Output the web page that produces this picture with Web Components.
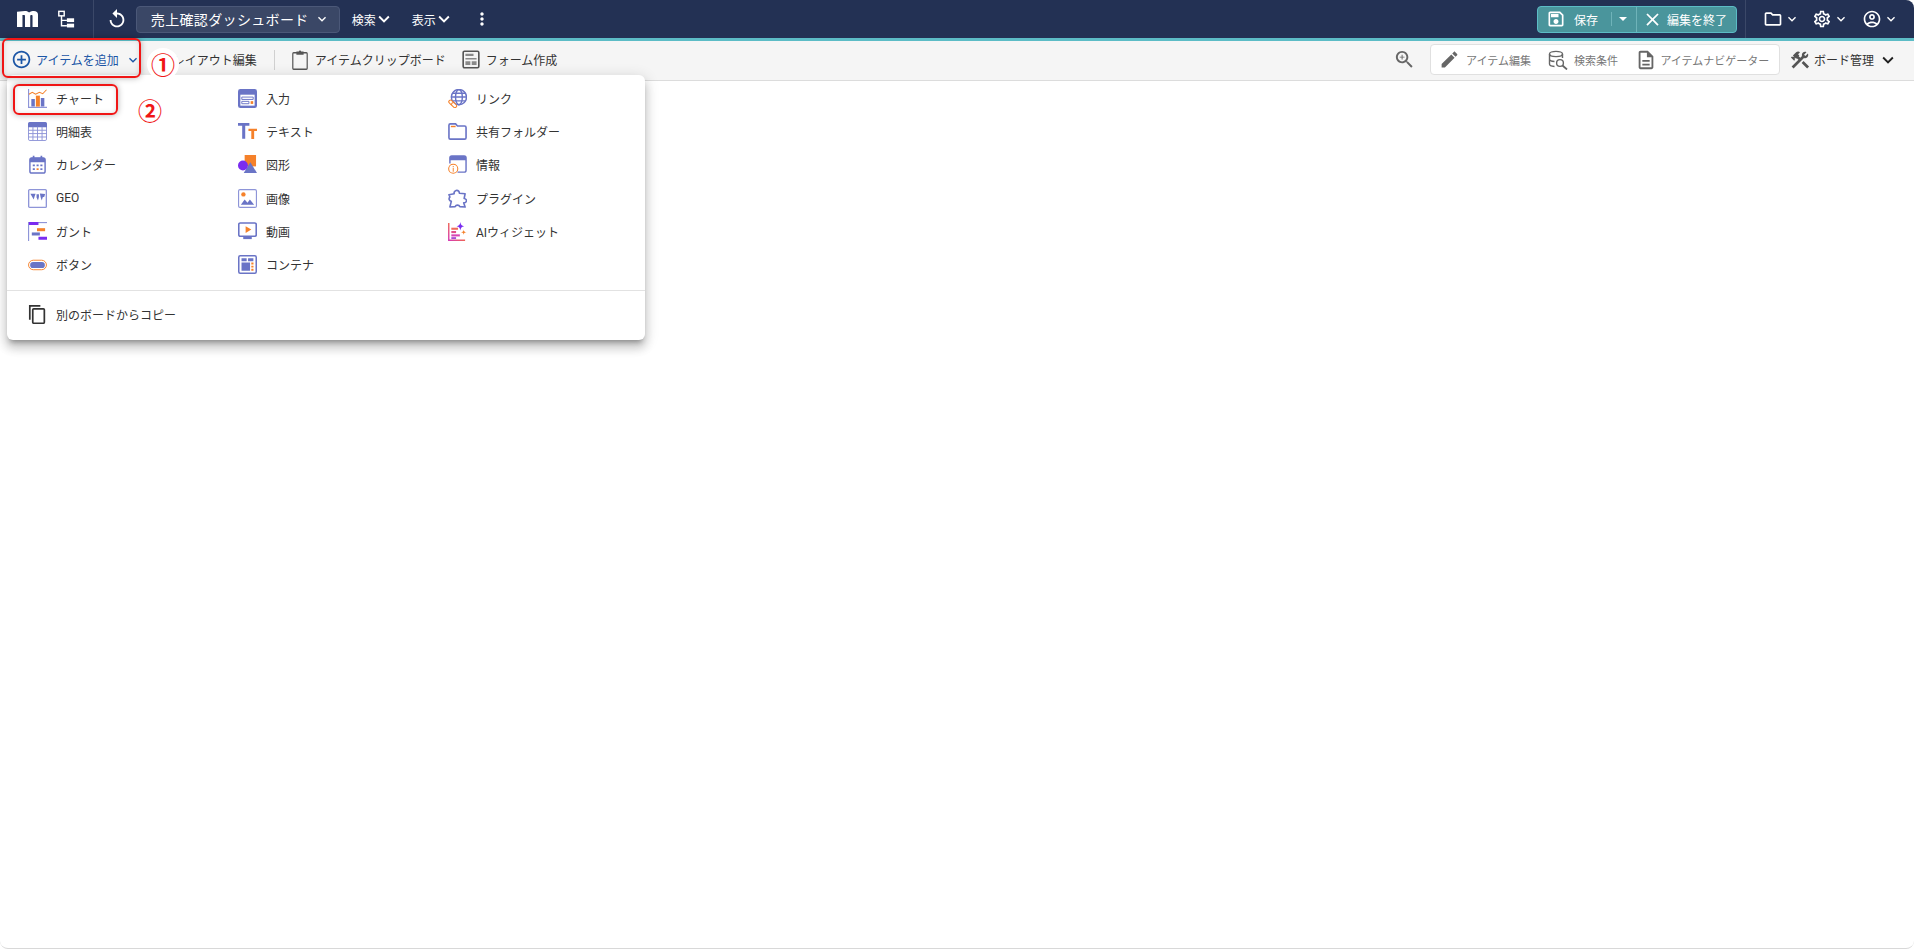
<!DOCTYPE html>
<html lang="ja">
<head>
<meta charset="utf-8">
<title>売上確認ダッシュボード</title>
<style>
  html, body { margin: 0; padding: 0; background: #fff; }
  body { font-family: Roboto, "Noto Sans CJK JP", sans-serif; }
</style>
</head>
<body>
<app-shell>
  <app-header></app-header>
  <app-toolbar></app-toolbar>
  <add-menu></add-menu>
  <callout-box style="left:2px;top:38px;width:135px;height:36px"></callout-box>
  <callout-box style="left:13px;top:84px;width:101px;height:27px"></callout-box>
  <callout-mark style="left:147px;top:48px" halo>①</callout-mark>
  <callout-mark style="left:134px;top:94px">②</callout-mark>
</app-shell>

<script>
// material style paths, drawn on a 24 box
const MAT = {
  chevron: 'M16.59 8.59L12 13.17 7.41 8.59 6 10l6 6 6-6z',
  kebab: 'M12 8c1.1 0 2-.9 2-2s-.9-2-2-2-2 .9-2 2 .9 2 2 2zm0 2c-1.1 0-2 .9-2 2s.9 2 2 2 2-.9 2-2-.9-2-2-2zm0 6c-1.1 0-2 .9-2 2s.9 2 2 2 2-.9 2-2-.9-2-2-2z',
  replay: 'M12 5V1L7 6l5 5V7c3.31 0 6 2.69 6 6s-2.69 6-6 6-6-2.69-6-6H4c0 4.42 3.58 8 8 8s8-3.58 8-8-3.58-8-8-8z',
  save: 'M17 3H5c-1.11 0-2 .9-2 2v14c0 1.1.89 2 2 2h14c1.1 0 2-.9 2-2V7l-4-4zm2 16H5V5h11.17L19 7.83V19zm-7-7c-1.66 0-3 1.34-3 3s1.34 3 3 3 3-1.34 3-3-1.34-3-3-3zM6 6h9v4H6z',
  close: 'M19 6.41L17.59 5 12 10.59 6.41 5 5 6.41 10.59 12 5 17.59 6.41 19 12 13.41 17.59 19 19 17.59 13.41 12z',
  folder: 'M9.17 6l2 2H20v10H4V6h5.17M10 4H4c-1.1 0-1.99.9-1.99 2L2 18c0 1.1.9 2 2 2h16c1.1 0 2-.9 2-2V8c0-1.1-.9-2-2-2h-8l-2-2z',
  gear: 'M19.43 12.98c.04-.32.07-.64.07-.98 0-.34-.03-.66-.07-.98l2.11-1.65c.19-.15.24-.42.12-.64l-2-3.46c-.09-.16-.26-.25-.44-.25-.06 0-.12.01-.17.03l-2.49 1c-.52-.4-1.08-.73-1.69-.98l-.38-2.65C14.46 2.18 14.25 2 14 2h-4c-.25 0-.46.18-.49.42l-.38 2.65c-.61.25-1.17.59-1.69.98l-2.49-1c-.06-.02-.12-.03-.18-.03-.17 0-.34.09-.43.25l-2 3.46c-.13.22-.07.49.12.64l2.11 1.65c-.04.32-.07.65-.07.98 0 .33.03.66.07.98l-2.11 1.65c-.19.15-.24.42-.12.64l2 3.46c.09.16.26.25.44.25.06 0 .12-.01.17-.03l2.49-1c.52.4 1.08.73 1.69.98l.38 2.65c.03.24.24.42.49.42h4c.25 0 .46-.18.49-.42l.38-2.65c.61-.25 1.17-.59 1.69-.98l2.49 1c.06.02.12.03.18.03.17 0 .34-.09.43-.25l2-3.46c.12-.22.07-.49-.12-.64l-2.11-1.65zm-1.98-1.71c.04.31.05.52.05.73 0 .21-.02.43-.05.73l-.14 1.13.89.7 1.08.84-.7 1.21-1.27-.51-1.04-.42-.9.68c-.43.32-.84.56-1.25.73l-1.06.43-.16 1.13-.2 1.35h-1.4l-.19-1.35-.16-1.13-1.06-.43c-.43-.18-.83-.41-1.23-.71l-.91-.7-1.06.43-1.27.51-.7-1.21 1.08-.84.89-.7-.14-1.13c-.03-.31-.05-.54-.05-.74s.02-.43.05-.73l.14-1.13-.89-.7-1.08-.84.7-1.21 1.27.51 1.04.42.9-.68c.43-.32.84-.56 1.25-.73l1.06-.43.16-1.13.2-1.35h1.39l.19 1.35.16 1.13 1.06.43c.43.18.83.41 1.23.71l.91.7 1.06-.43 1.27-.51.7 1.21-1.07.85-.89.7.14 1.13zM12 8c-2.21 0-4 1.79-4 4s1.79 4 4 4 4-1.79 4-4-1.79-4-4-4zm0 6c-1.1 0-2-.9-2-2s.9-2 2-2 2 .9 2 2-.9 2-2 2z',
  user: 'M12 2C6.48 2 2 6.48 2 12s4.48 10 10 10 10-4.48 10-10S17.52 2 12 2zM7.35 18.5C8.66 17.56 10.26 17 12 17s3.34.56 4.65 1.5c-1.31.94-2.91 1.5-4.65 1.5s-3.34-.56-4.65-1.5zm10.79-1.38C16.45 15.8 14.32 15 12 15s-4.45.8-6.14 2.12C4.7 15.73 4 13.95 4 12c0-4.42 3.58-8 8-8s8 3.58 8 8c0 1.95-.7 3.73-1.86 5.12zM12 6c-1.93 0-3.5 1.57-3.5 3.5S10.07 13 12 13s3.5-1.57 3.5-3.5S13.93 6 12 6zm0 5c-.83 0-1.5-.67-1.5-1.5S11.17 8 12 8s1.5.67 1.5 1.5S12.83 11 12 11z',
  zoom: 'M15.5 14h-.79l-.28-.27C15.41 12.59 16 11.11 16 9.5 16 5.91 13.09 3 9.5 3S3 5.91 3 9.5 5.91 16 9.5 16c1.61 0 3.09-.59 4.23-1.57l.27.28v.79l5 4.99L20.49 19l-4.99-5zm-6 0C7.01 14 5 11.99 5 9.5S7.01 5 9.5 5 14 7.01 14 9.5 11.99 14 9.5 14zM12 10h-2v2H9v-2H7V9h2V7h1v2h2v1z',
  edit: 'M3 17.25V21h3.75L17.81 9.94l-3.75-3.75L3 17.25zM20.71 7.04c.39-.39.39-1.02 0-1.41l-2.34-2.34c-.39-.39-1.02-.39-1.41 0l-1.83 1.83 3.75 3.75 1.83-1.83z',
  doc: 'M8 16h8v2H8zm0-4h8v2H8zm6-10H6c-1.1 0-2 .9-2 2v16c0 1.1.89 2 1.99 2H18c1.1 0 2-.9 2-2V8l-6-6zm4 18H6V4h7v5h5v11z',
  tools: 'M13.78 15.3L19.78 21.3L21.89 19.14L15.89 13.14L13.78 15.3M17.5 10.1C17.11 10.1 16.69 10.05 16.36 9.91L4.97 21.25L2.86 19.14L10.27 11.74L8.5 9.96L7.78 10.66L6.33 9.25V12.11L5.63 12.81L2.11 9.25L2.81 8.55H5.62L4.22 7.14L7.78 3.58C8.95 2.41 10.83 2.41 12 3.58L9.89 5.74L11.3 7.14L10.59 7.85L12.38 9.63L14.2 7.75C14.06 7.42 14 7 14 6.63C14 4.66 15.56 3.11 17.5 3.11C18.09 3.11 18.61 3.25 19.08 3.53L16.41 6.2L17.91 7.7L20.58 5.03C20.86 5.5 21 6 21 6.63C21 8.55 19.45 10.1 17.5 10.1Z',
  plus: 'M13 7h-2v4H7v2h4v4h2v-4h4v-2h-4V7zm-1-5C6.48 2 2 6.48 2 12s4.48 10 10 10 10-4.48 10-10S17.52 2 12 2zm0 18c-4.41 0-8-3.59-8-8s3.59-8 8-8 8 3.59 8 8-3.59 8-8 8z'
};

// hand drawn ones, on a 20 box
const B = '#6a74c6', L = '#8e95d8', O = '#f5812a', P = '#7a2cf0';
const DRAWN = {
  logo: `<path fill="currentColor" d="M0 1 7.5 0C9.5 0 10.800 .8 11.500 2 13 .5 14.800 0 16 0c2.500 0 4 1.700 4 4.300V20h-5.200V6.300c0-.9-.3-1.300-1-1.300s-1.200.5-1.200 1.200V20H7.600V6.300c0-.9-.3-1.300-1-1.300H5.200V20H0z"/>`,
  tree: `<g fill="none" stroke="currentColor" stroke-width="1.6"><rect x="2" y="1.5" width="6" height="5"/><path d="M5 6.5V17.5H11M5 11.5H11"/></g><rect x="11" y="9.2" width="8" height="4.2" fill="currentColor"/><rect x="11" y="15.2" width="8" height="4.2" fill="currentColor"/>`,
  clip: `<rect x="1" y="2.800" width="18" height="16.400" rx="1" fill="none" stroke="#555" stroke-width="1.500"/><path fill="#555" d="M5.500 1.500h3a1.500 1 0 0 1 3 0h3V4.800h-9z"/>`,
  form: `<rect x="1.300" y="1.300" width="17.400" height="17.400" rx="1.500" fill="none" stroke="#555" stroke-width="1.800"/><path fill="#8a8a8a" d="M3.800 4h9v2.400h-9zM3.800 8.300h12.400v1.800H3.800zM3.800 11.800h5.500v4H3.800zM10.800 11.800h5.400v4h-5.400z"/>`,
  dbsearch: `<g fill="none" stroke="#666" stroke-width="1.400"><ellipse cx="8" cy="4" rx="6.500" ry="2.600"/><path d="M1.500 4v10c0 1.300 2.200 2.300 5 2.500M14.500 4v4M1.500 9c0 1.300 2.400 2.400 5 2.500"/><circle cx="12" cy="13" r="3.400"/><path d="M14.500 15.500 19 19.500" stroke-width="1.700"/></g>`,
  copy: `<path fill="#333" d="M1 0h12v1.800H2.800V15.500H1z"/><rect x="5" y="4" width="12.200" height="15.200" rx="1" fill="none" stroke="#333" stroke-width="1.800"/>`,
  chart: `<path d="M.6 0V19.400H20" fill="none" stroke="${L}" stroke-width="1.200"/><path fill="${B}" d="M3.500 10.500h3.700V18.500H3.500zM13.500 9.500h3.700V18.500h-3.700z"/><path fill="${O}" d="M8.300 7h4.200V18.500H8.300z"/><path d="M1 5.500 4.500 3.500 8 5.500 12 3.500 15.500 5 19.500.8" fill="none" stroke="${O}" stroke-width="1.100"/>`,
  table: `<rect x=".5" y=".5" width="19" height="19" rx="1.500" fill="#fff" stroke="${L}"/><path fill="${B}" d="M2 0h16a2 2 0 0 1 2 2v3.500H0V2a2 2 0 0 1 2-2z"/><path stroke="${L}" d="M5.200 5v14M10 5v14M14.800 5v14M0 8.700h20M0 12.200h20M0 15.800h20"/>`,
  calendar: `<rect x="2" y="3" width="16" height="16" rx="2" fill="none" stroke="${B}" stroke-width="1.500"/><path fill="${B}" d="M2 5a2 2 0 0 1 2-2h12a2 2 0 0 1 2 2v2.500H2zM5 .8h1.800v3H5zM13.200 .8H15v3h-1.800z"/><path fill="${B}" d="M5 10h2.200v1.800H5zM9 10h2.200v1.800H9zM13 10h2.200v1.800H13zM5 14h2.200v1.800H5z"/><path fill="${O}" d="M9 14h2.200v1.800H9z"/><path fill="${B}" d="M13 14h2.200v1.800H13z"/>`,
  geo: `<rect x=".7" y=".7" width="18.600" height="18.600" rx="1" fill="none" stroke="${L}" stroke-width="1.400"/><path fill="${B}" d="M2.500 5h5.500L7 7.500 6 11 4.200 8zM9 5.500h2.500v2.800l-1 3.700L9 9zM12.500 4.800l5.500.4-.8 3-1.700.4-1 3.500-1.200-3.500z"/>`,
  gantt: `<path d="M.6 0V20" stroke="${L}" stroke-width="1.200"/><path d="M1 .6H20" stroke="${L}" stroke-width="1.200"/><path fill="${P}" d="M1 0h10v3.200H1zM11 15.500h9v3.200h-9z"/><path fill="${O}" d="M9.500 6.500h8.500v3.200H9.500z"/><path fill="${B}" d="M4 11h8.500v3.200H4z"/>`,
  button: `<rect x=".6" y="5.500" width="18.800" height="10" rx="5" fill="#fff" stroke="${O}"/><rect x="2.300" y="7.300" width="15.400" height="6.400" rx="3" fill="${B}"/>`,
  input: `<rect width="20" height="20" rx="2.500" fill="${B}"/><rect x="2.500" y="6" width="15" height="11.500" fill="#fff"/><path fill="none" stroke="${B}" d="M4 8.500h12v2.500H4zM4 13h7.500v2.500H4z"/><path fill="${O}" d="M13.300 12.800h2.700v2.900h-2.700z"/>`,
  text: `<path fill="${B}" d="M0 1h12v3H7.600v13.500H4.400V4H0z"/><path fill="${O}" d="M11 7h9v2.600h-3V18h-3V9.600h-3z"/>`,
  shape: `<path fill="${O}" d="M7 0h12v12H7z"/><path fill="${B}" d="M13 7.500 20 19H6z"/><circle cx="5.200" cy="11" r="5.200" fill="${P}"/>`,
  image: `<rect x=".6" y=".6" width="18.800" height="18.800" rx="1.500" fill="#fff" stroke="${L}" stroke-width="1.200"/><circle cx="5.700" cy="5.700" r="2.300" fill="${O}"/><path fill="${B}" d="M3 16.500 7 11l3 3.600 2.500-3.600 4.500 5.500z"/>`,
  video: `<rect x=".8" y="1" width="18.400" height="14" rx="1.500" fill="#fff" stroke="${B}" stroke-width="1.700"/><path fill="${O}" d="M8 4.500 14 8l-6 3.500z"/><path fill="${B}" d="M5.500 15.500h9V18h-9z"/>`,
  container: `<rect x=".8" y=".8" width="18.400" height="18.400" rx="1.500" fill="#fff" stroke="${B}" stroke-width="1.600"/><path fill="${B}" d="M3.700 3.500h5.400v3H3.700zM10.600 3.500h5.600v3h-5.600zM3.700 8h9v8.500h-9z"/><path fill="${O}" d="M14 8h2.300v2H14zM14 11.200h2.300v2H14zM14 14.500h2.300v2H14z"/>`,
  link: `<g fill="none" stroke="${B}" stroke-width="1.500"><circle cx="11.500" cy="8.500" r="8"/><ellipse cx="11.500" cy="8.500" rx="3.600" ry="8"/><path d="M3.500 8.500h16M4.700 4.500h13.600M4.700 12.500h13.600"/></g><g fill="#fff" stroke="${O}" stroke-width="1.100"><rect x=".5" y="12.500" width="6" height="3.600" rx="1.800" transform="rotate(45 3.500 14.300)"/><rect x="3.400" y="15.200" width="6" height="3.600" rx="1.800" transform="rotate(45 6.400 17)"/></g>`,
  share: `<path d="M1 3.500a1.500 1.500 0 0 1 1.500-1.500H8l2 2.200h7.500A1.500 1.500 0 0 1 19 5.700V16.500a1.500 1.500 0 0 1-1.500 1.500h-15A1.500 1.500 0 0 1 1 16.500z" fill="none" stroke="${B}" stroke-width="1.700"/><path fill="${O}" d="M3 4h5v1.500H3z"/>`,
  info: `<path d="M2 9V3a2 2 0 0 1 2-2h13a2 2 0 0 1 2 2v13a2 2 0 0 1-2 2H10" fill="none" stroke="${B}" stroke-width="1.500"/><path fill="${B}" d="M2 3a2 2 0 0 1 2-2h13a2 2 0 0 1 2 2v2.500H2z"/><circle cx="5.500" cy="14.500" r="4.800" fill="#fff" stroke="${O}" stroke-width="1.100"/><path fill="${O}" d="M5 13.500h1v4H5zM5 11.600h1v1H5z"/>`,
  plugin: `<path d="M8.500 1.500C11 1 12 3 12 4.500L18 5 17 10C19 10 20 12 19 13.500 18.500 14.500 17 14.500 16.500 14.500L18 19 12.500 18.500C11.500 16.500 8.500 16.500 7.500 18.500L2 19 3.500 13C1 12.500 .5 10 2 8.500L1 6 6.500 5C6 3 7 2 8.500 1.500Z" fill="none" stroke="${B}" stroke-width="1.700" stroke-linejoin="round"/>`,
  ai: `<defs><linearGradient id="aig" x1="0" y1="1" x2="1" y2="0"><stop offset="0" stop-color="#d63bb4"/><stop offset=".55" stop-color="#f26a4a"/><stop offset="1" stop-color="#6a4cf0"/></linearGradient></defs><path d="M.8 1V19.200H18" fill="none" stroke="url(#aig)" stroke-width="1.500"/><path fill="#f06a5a" d="M3.500 6h7v2.200h-7z"/><path fill="#e0508a" d="M3.500 9.500h5v2.200h-5z"/><path fill="#d845b4" d="M3.500 13h9v2.200h-9z"/><path fill="#a13ccf" d="M3.500 16h5v1.800h-5z"/><path fill="${P}" d="M13 0c.4 3 1.300 4 4 4.500-2.700.5-3.600 1.500-4 4.500-.4-3-1.300-4-4-4.500 2.700-.5 3.600-1.500 4-4.500z"/><path fill="${O}" d="M16.500 8c.2 1.900.8 2.500 3 2.900-2.200.4-2.800 1-3 2.900-.2-1.900-.8-2.500-3-2.900 2.200-.4 2.800-1 3-2.900z"/>`
};

class AppIcon extends HTMLElement {
  connectedCallback() {
    const name = this.getAttribute('name');
    const w = this.getAttribute('w') || this.getAttribute('size') || 20;
    const h = this.getAttribute('h') || this.getAttribute('size') || 20;
    const root = this.shadowRoot || this.attachShadow({ mode: 'open' });
    const inner = MAT[name] ? `<path fill="currentColor" d="${MAT[name]}"/>` : DRAWN[name];
    const box = MAT[name] ? '0 0 24 24' : '0 0 20 20';
    root.innerHTML = `<style>:host{display:inline-flex;flex:none;line-height:0}svg{display:block}</style>
      <svg width="${w}" height="${h}" viewBox="${box}" preserveAspectRatio="none">${inner}</svg>`;
  }
}
customElements.define('app-icon', AppIcon);

class AppShell extends HTMLElement {
  constructor() {
    super();
    this.attachShadow({ mode: 'open' }).innerHTML = `
      <style>
        :host {
          display: flex; flex-direction: column; position: relative;
          height: 948px; overflow: hidden; background: #fff;
          border-bottom: 1px solid #d8d8d8; border-radius: 0 8px 8px 8px;
          color: #333; font-size: 12px;
        }
      </style>
      <slot></slot>`;
  }
}
customElements.define('app-shell', AppShell);

class AppHeader extends HTMLElement {
  constructor() {
    super();
    this.attachShadow({ mode: 'open' }).innerHTML = `
      <style>
        :host {
          display: flex; align-items: center; height: 38px; flex: none;
          background: #233154; color: #fff; border-bottom: 3px solid #5cbcc6;
          padding: 0 15.5px 0 17px; font-size: 12px;
        }
        .sep { width: 1px; height: 38px; background: #3b4868; }
        .title {
          display: flex; align-items: center; justify-content: space-between;
          box-sizing: border-box; width: 204px; height: 27px; margin-left: 7.5px;
          padding: 0 9px 0 14px; background: #3a4766; border: 1px solid #4b5878;
          border-radius: 4px; font-size: 14px; letter-spacing: .35px;
        }
        .menu { display: flex; align-items: center; }
        .menu app-icon { margin-left: -2.5px; }
        .right { display: flex; align-items: center; margin-left: auto; }
        .save {
          display: flex; align-items: center; box-sizing: border-box;
          width: 200px; height: 27px; background: #4a959c; border: 1px solid #5cbcc6;
          border-radius: 4px;
        }
        .save span { white-space: nowrap; }
        .line { width: 1px; height: 14px; background: #6fb3b9; }
        .tall { width: 1px; height: 100%; background: #6fb3b9; }
        .caret { width: 0; height: 0; border: 4px solid transparent; border-top: 4px solid #fff; border-bottom: 0; }
      </style>
      <app-icon name="logo" w="21" h="16"></app-icon>
      <app-icon name="tree" w="18" h="18" style="margin-left:19px"></app-icon>
      <div class="sep" style="margin-left:17.8px"></div>
      <app-icon name="replay" size="22" style="margin-left:12.5px"></app-icon>
      <div class="title"><span>売上確認ダッシュボード</span><app-icon name="chevron" size="16"></app-icon></div>
      <div class="menu" style="margin-left:12px"><span>検索</span><app-icon name="chevron" size="22"></app-icon></div>
      <div class="menu" style="margin-left:16.5px"><span>表示</span><app-icon name="chevron" size="22"></app-icon></div>
      <app-icon name="kebab" size="20" style="margin-left:17px"></app-icon>
      <div class="right">
        <div class="save">
          <app-icon name="save" size="20" style="margin-left:8.3px"></app-icon>
          <span style="margin-left:7.7px">保存</span>
          <div class="line" style="margin-left:12.6px"></div>
          <div class="caret" style="margin-left:7px"></div>
          <div class="tall" style="margin-left:9px"></div>
          <app-icon name="close" size="21" style="margin-left:5px"></app-icon>
          <span style="margin-left:4.5px">編集を終了</span>
        </div>
        <div class="sep" style="margin-left:8px"></div>
        <app-icon name="folder" size="20" style="margin-left:16.5px"></app-icon>
        <app-icon name="chevron" size="16" style="margin-left:1px"></app-icon>
        <app-icon name="gear" size="20" style="margin-left:12.5px"></app-icon>
        <app-icon name="chevron" size="16" style="margin-left:.5px"></app-icon>
        <app-icon name="user" size="20" style="margin-left:13px"></app-icon>
        <app-icon name="chevron" size="16" style="margin-left:1px"></app-icon>
      </div>`;
  }
}
customElements.define('app-header', AppHeader);

class AppToolbar extends HTMLElement {
  constructor() {
    super();
    this.attachShadow({ mode: 'open' }).innerHTML = `
      <style>
        :host {
          display: flex; align-items: center; height: 40px; flex: none; box-sizing: border-box;
          background: #f5f5f5; border-bottom: 1px solid #dcdcdc;
          padding: 0 15.5px 2px 11px; font-size: 12px; color: #333;
        }
        .add { display: flex; align-items: center; color: #1c56a6; }
        .sep { width: 1px; height: 20px; background: #d0d0d0; }
        .item { display: flex; align-items: center; white-space: nowrap; }
        .right { display: flex; align-items: center; margin-left: auto; }
        .panel {
          display: flex; align-items: center; box-sizing: border-box; width: 350px; height: 31px;
          margin-left: 13.5px; background: #fff; border: 1px solid #e0e0e0; border-radius: 4px;
          color: #777; font-size: 11px; white-space: nowrap;
        }
      </style>
      <div class="add">
        <app-icon name="plus" size="21"></app-icon>
        <span style="margin-left:4px">アイテムを追加</span>
        <app-icon name="chevron" size="16" style="margin-left:6px"></app-icon>
      </div>
      <span style="margin-left:32px;white-space:nowrap">レイアウト編集</span>
      <div class="sep" style="margin-left:17px"></div>
      <div class="item" style="margin-left:17px"><app-icon name="clip" w="16" h="20"></app-icon><span style="margin-left:7px">アイテムクリップボード</span></div>
      <div class="item" style="margin-left:16px"><app-icon name="form" w="18" h="19"></app-icon><span style="margin-left:6px">フォーム作成</span></div>
      <div class="right">
        <app-icon name="zoom" size="23" style="color:#666"></app-icon>
        <div class="panel">
          <app-icon name="edit" size="21" style="margin-left:8.5px;color:#666"></app-icon>
          <span style="margin-left:5.5px">アイテム編集</span>
          <app-icon name="dbsearch" size="20" style="margin-left:17px"></app-icon>
          <span style="margin-left:6px">検索条件</span>
          <app-icon name="doc" size="22" style="margin-left:17px;color:#666"></app-icon>
          <span style="margin-left:3.5px">アイテムナビゲーター</span>
        </div>
        <app-icon name="tools" size="22" style="margin-left:9px;color:#555"></app-icon>
        <span style="margin-left:3px;white-space:nowrap">ボード管理</span>
        <app-icon name="chevron" size="22" style="margin-left:2.500px;color:#222"></app-icon>
      </div>`;
  }
}
customElements.define('app-toolbar', AppToolbar);

class MenuItem extends HTMLElement {
  constructor() {
    super();
    this.attachShadow({ mode: 'open' }).innerHTML = `
      <style>
        :host { display: flex; align-items: center; gap: 9px; height: 33.33px; font-size: 12px; color: #333; white-space: nowrap; }
      </style>
      <app-icon size="19"></app-icon><slot></slot>`;
  }
  connectedCallback() {
    const icon = this.shadowRoot.querySelector('app-icon');
    icon.setAttribute('name', this.getAttribute('icon'));
    // the icon may have been connected before the name was set
    icon.connectedCallback();
  }
}
customElements.define('menu-item', MenuItem);

class AddMenu extends HTMLElement {
  constructor() {
    super();
    const cols = [
      [['chart', 'チャート'], ['table', '明細表'], ['calendar', 'カレンダー'], ['geo', 'GEO'], ['gantt', 'ガント'], ['button', 'ボタン']],
      [['input', '入力'], ['text', 'テキスト'], ['shape', '図形'], ['image', '画像'], ['video', '動画'], ['container', 'コンテナ']],
      [['link', 'リンク'], ['share', '共有フォルダー'], ['info', '情報'], ['plugin', 'プラグイン'], ['ai', 'AIウィジェット']]
    ];
    const columns = cols.map(c => `<div>${c.map(([i, t]) => `<menu-item icon="${i}">${t}</menu-item>`).join('')}</div>`).join('');
    this.attachShadow({ mode: 'open' }).innerHTML = `
      <style>
        :host {
          display: block; position: absolute; left: 7px; top: 75px; width: 638px; height: 265px;
          background: #fff; border-radius: 6px;
          box-shadow: 0 5px 5px -3px rgba(0,0,0,.3), 0 8px 10px 1px rgba(0,0,0,.14), 0 3px 14px 2px rgba(0,0,0,.12);
        }
        .grid { display: grid; grid-template-columns: repeat(3, 210px); padding: 6.5px 0 0 21px; height: 215px; box-sizing: border-box; }
        hr { margin: 0; border: 0; border-top: 1px solid #e2e2e2; }
        .foot { padding: 7px 0 0 21px; }
      </style>
      <div class="grid">${columns}</div>
      <hr>
      <div class="foot"><menu-item icon="copy">別のボードからコピー</menu-item></div>`;
  }
}
customElements.define('add-menu', AddMenu);

class CalloutBox extends HTMLElement {
  constructor() {
    super();
    this.attachShadow({ mode: 'open' }).innerHTML = `
      <style>
        :host {
          display: block; position: absolute; border: 2px solid #f01616; border-radius: 6px;
          box-shadow: 0 0 6px rgba(0,0,0,.3), inset 0 0 5px rgba(0,0,0,.12);
        }
      </style>`;
  }
}
customElements.define('callout-box', CalloutBox);

class CalloutMark extends HTMLElement {
  constructor() {
    super();
    this.attachShadow({ mode: 'open' }).innerHTML = `
      <style>
        :host {
          display: flex; align-items: center; justify-content: center; position: absolute;
          width: 32px; height: 32px; color: #f01616; font-size: 24px; font-weight: 700;
          font-family: "Noto Sans CJK JP", sans-serif; line-height: 1; border-radius: 50%;
        }
        :host([halo]) { background: #fff; }
      </style>
      <slot></slot>`;
  }
}
customElements.define('callout-mark', CalloutMark);
</script>
</body>
</html>
